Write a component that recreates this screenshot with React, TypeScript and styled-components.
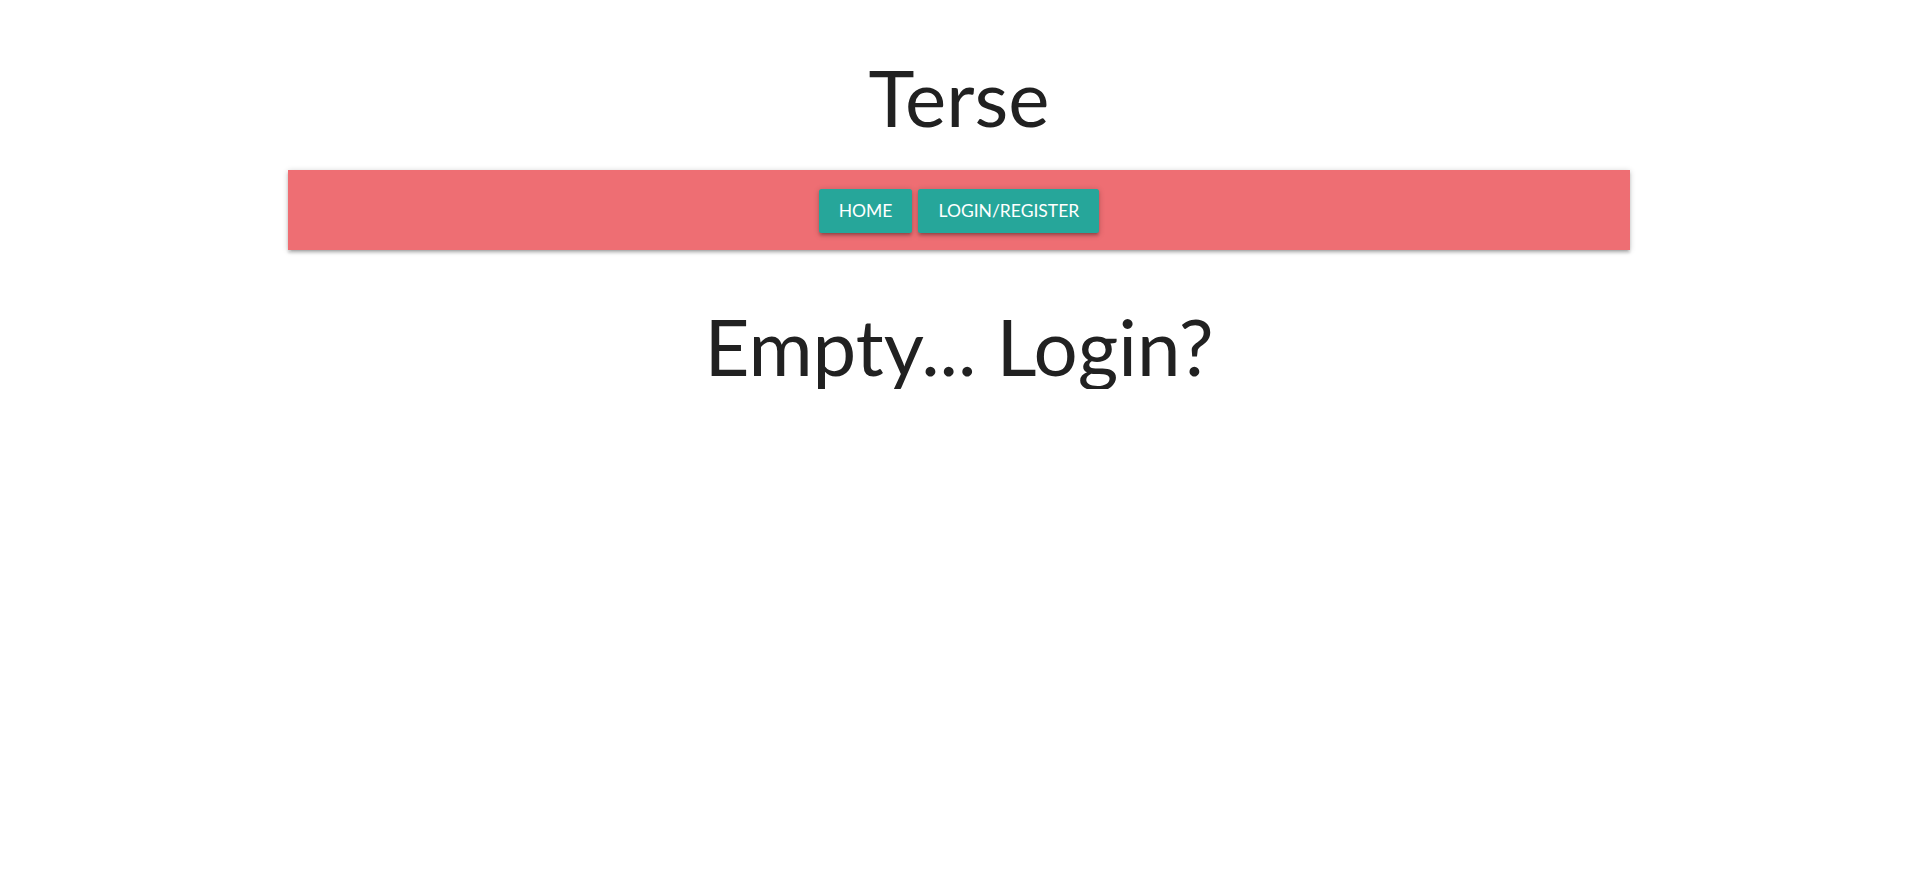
import React from 'react';
import styled, { createGlobalStyle } from 'styled-components';

const GlobalStyle = createGlobalStyle`
  html, body {
    margin: 0;
    padding: 0;
    background: #ffffff;
  }
  body {
    font-family: "Segoe UI", Lato, "Noto Sans", sans-serif;
    color: rgba(0, 0, 0, 0.87);
  }
`;

const Page = styled.div`
  width: 70%;
  margin: 0 auto;
  display: flex;
  flex-direction: column;
  align-items: stretch;
`;

const Heading = styled.h1<{ $top: number; $bottom: number }>`
  margin: ${(p) => p.$top}px 0 ${(p) => p.$bottom}px;
  font-size: 78px;
  font-weight: 400;
  line-height: 86.6px;
  text-align: center;
  color: #212121;
`;

const Nav = styled.nav`
  height: 80px;
  background-color: #ee6e73;
  display: flex;
  align-items: center;
  justify-content: center;
  gap: 6px;
  box-shadow: 0 2.5px 2.5px 0 rgba(0, 0, 0, 0.14), 0 3.75px 1.25px -2.5px rgba(0, 0, 0, 0.12),
    0 1.25px 6px 0 rgba(0, 0, 0, 0.2);
`;

const NavButton = styled.a`
  display: inline-flex;
  align-items: center;
  height: 44px;
  padding: 0 20px;
  margin-top: 2px;
  background-color: #26a69a;
  color: #ffffff;
  font-size: 17.5px;
  text-transform: uppercase;
  text-decoration: none;
  border-radius: 2.5px;
  cursor: pointer;
  box-shadow: 0 2.5px 2.5px 0 rgba(0, 0, 0, 0.14), 0 3.75px 1.25px -2.5px rgba(0, 0, 0, 0.12),
    0 1.25px 6px 0 rgba(0, 0, 0, 0.2);
`;

function App() {
  return (
    <>
      <GlobalStyle />
      <Page>
        <Heading $top={54} $bottom={29}>Terse</Heading>
        <Nav>
          <NavButton>Home</NavButton>
          <NavButton>Login/Register</NavButton>
        </Nav>
        <Heading $top={53} $bottom={0}>Empty... Login?</Heading>
      </Page>
    </>
  );
}

export default App;
